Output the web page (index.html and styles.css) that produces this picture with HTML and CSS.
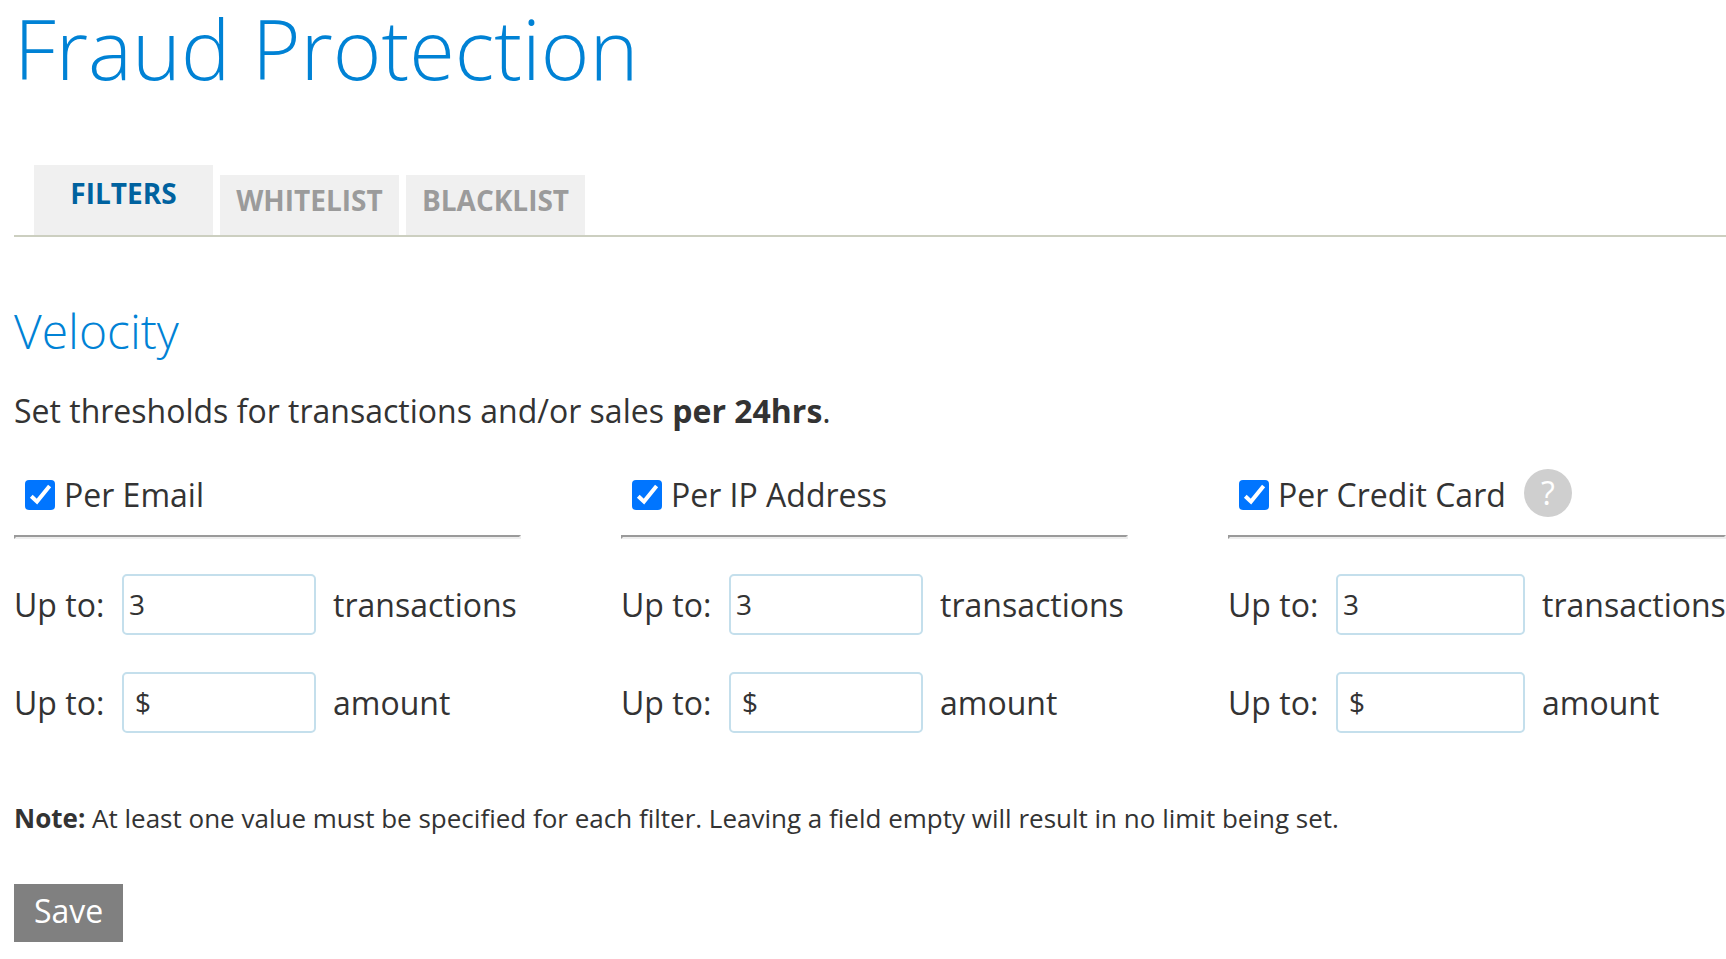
FILE: index.html
```html
<!DOCTYPE html>
<html lang="en">
<head>
    <meta charset="UTF-8">
    <meta name="viewport" content="width=device-width, initial-scale=1.0">
    <title>Fraud Protection</title>
    <link rel="stylesheet" href="styles.css">
</head>
<body>
    <h1>Fraud Protection</h1>

    <nav class="tabs">
        <a href="#filters" class="tab active">FILTERS</a>
        <a href="#whitelist" class="tab">WHITELIST</a>
        <a href="#blacklist" class="tab">BLACKLIST</a>
    </nav>

    <form id="filters">
        <h2>Velocity</h2>
        <p class="intro">Set thresholds for transactions and/or sales <strong>per 24hrs</strong>.</p>

        <div class="filters">
            <!-- Email -->
            <div class="filter">
                <div class="filter-title">
                    <input type="checkbox" id="perEmail" checked>
                    <label for="perEmail">Per Email</label>
                </div>
                <hr>
                <div class="limit">
                    <label for="emailCount">Up to:</label>
                    <input type="text" id="emailCount" value="3">
                    <span class="unit">transactions</span>
                </div>
                <div class="limit">
                    <label for="emailAmount">Up to:</label>
                    <input type="text" id="emailAmount" class="money" value="$">
                    <span class="unit">amount</span>
                </div>
            </div>

            <!-- IP address -->
            <div class="filter">
                <div class="filter-title">
                    <input type="checkbox" id="perIp" checked>
                    <label for="perIp">Per IP Address</label>
                </div>
                <hr>
                <div class="limit">
                    <label for="ipCount">Up to:</label>
                    <input type="text" id="ipCount" value="3">
                    <span class="unit">transactions</span>
                </div>
                <div class="limit">
                    <label for="ipAmount">Up to:</label>
                    <input type="text" id="ipAmount" class="money" value="$">
                    <span class="unit">amount</span>
                </div>
            </div>

            <!-- Credit card -->
            <div class="filter">
                <div class="filter-title">
                    <input type="checkbox" id="perCard" checked>
                    <label for="perCard">Per Credit Card</label>
                    <button type="button" class="help">?</button>
                </div>
                <hr>
                <div class="limit">
                    <label for="cardCount">Up to:</label>
                    <input type="text" id="cardCount" value="3">
                    <span class="unit">transactions</span>
                </div>
                <div class="limit">
                    <label for="cardAmount">Up to:</label>
                    <input type="text" id="cardAmount" class="money" value="$">
                    <span class="unit">amount</span>
                </div>
            </div>
        </div>

        <p class="note"><strong>Note:</strong> At least one value must be specified for each filter. Leaving a field empty will result in no limit being set.</p>

        <button type="submit" class="save">Save</button>
    </form>
</body>
</html>
```

FILE: styles.css
```css
* {
    box-sizing: border-box;
}

body {
    margin: 0;
    padding-left: 14px;
    font-family: "Open Sans", sans-serif;
    font-size: 32px;
    line-height: 44px;
    color: #333;
    background: #fff;
}

h1 {
    margin: 0;
    font-size: 83px;
    font-weight: 300;
    line-height: 96px;
    color: #0082d5;
}

/* Tabs */
.tabs {
    display: flex;
    align-items: flex-end;
    gap: 7px;
    margin-top: 69px;
    padding-left: 20px;
    border-bottom: 2px solid #cccfc0;
}

.tab {
    width: 179px;
    height: 60px;
    padding-top: 3px;
    font-size: 28px;
    font-weight: bold;
    text-align: center;
    text-decoration: none;
    color: #9b9b9b;
    background: #f0f0f0;
}

.tab.active {
    height: 70px;
    padding-top: 6px;
    color: #00629f;
}

h2 {
    margin: 59px 0 0;
    font-size: 48px;
    font-weight: 300;
    line-height: 70px;
    color: #0082d5;
}

.intro {
    margin: 23px 0 0;
}

/* Filter columns */
.filters {
    display: grid;
    grid-template-columns: 607fr 607fr 498fr;
    margin-top: 32px;
}

.filter {
    min-width: 0;
    padding-right: 100px;
}

.filter:last-child {
    padding-right: 0;
}

.filter-title {
    display: flex;
    align-items: center;
    height: 60px;
    padding-left: 11px;
    white-space: nowrap;
}

.filter-title input {
    appearance: none;
    width: 30px;
    height: 30px;
    margin: 0 9px 0 0;
    border: 2px solid #767676;
    border-radius: 4px;
}

.filter-title input:checked {
    border: 0;
    background: #0075ff url('data:image/svg+xml,<svg xmlns="http://www.w3.org/2000/svg" viewBox="0 0 30 30"><path d="M6.3 16.2L12 21.6L24.6 6" fill="none" stroke="white" stroke-width="4"/></svg>');
}

.help {
    width: 48px;
    height: 48px;
    margin: 0 0 4px 18px;
    padding: 0;
    border: 0;
    border-radius: 50%;
    font-family: inherit;
    font-size: 32px;
    line-height: 48px;
    color: #fff;
    background: #cfcfcf;
}

hr {
    margin: 10px 0 35px;
    border: 2px inset #eee;
}

.limit {
    display: flex;
    align-items: center;
    margin-bottom: 37px;
}

.limit label {
    flex: none;
    width: 108px;
}

.limit input {
    flex: 0 1 194px;
    min-width: 0;
    height: 61px;
    padding: 0 5px 1px;
    border: 2px solid #c4dfec;
    border-radius: 5px;
    font-family: inherit;
    font-size: 28px;
    color: #333;
}

.limit input.money {
    padding-left: 11px;
}

.unit {
    flex: none;
    min-width: 184px;
    margin-left: 17px;
}

.note {
    margin: 26px 0 0;
    font-size: 26px;
}

.save {
    margin-top: 44px;
    padding: 5px 20px 9px;
    border: 0;
    font-family: inherit;
    font-size: 32px;
    line-height: 44px;
    color: #fff;
    background: #808080;
}
```
